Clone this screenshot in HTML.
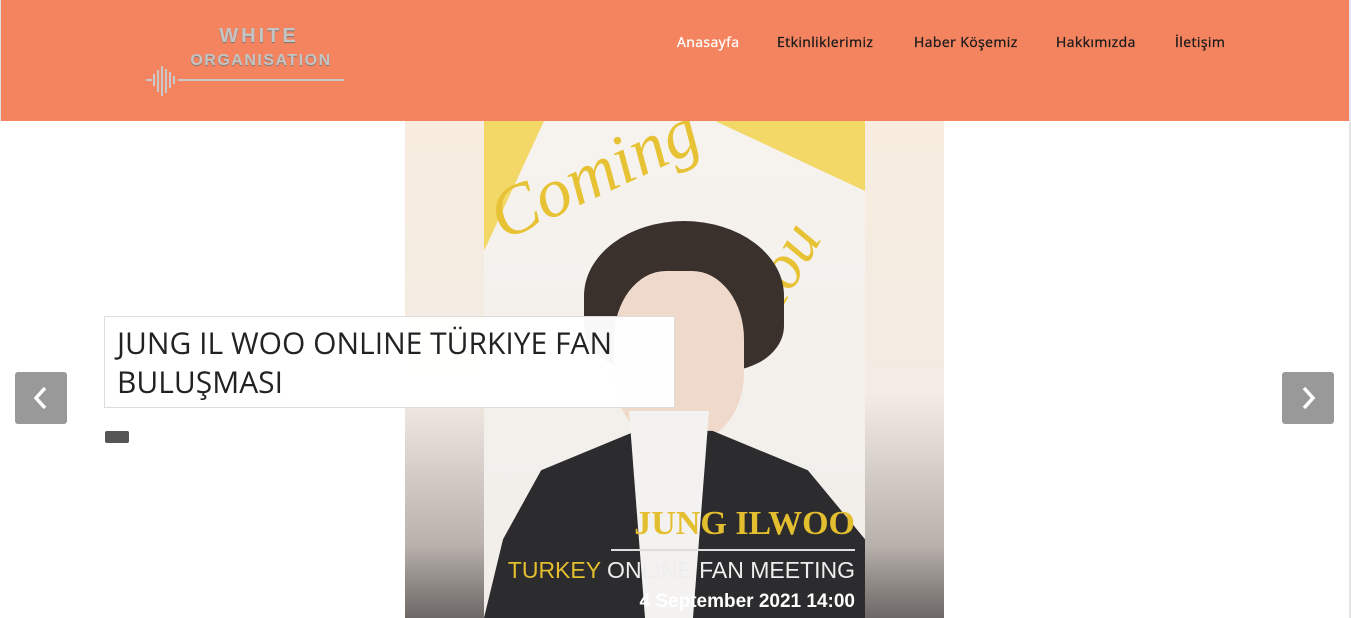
<!DOCTYPE html>
<html><head><meta charset="utf-8"><style>
*{margin:0;padding:0;box-sizing:border-box}
body{width:1351px;height:618px;overflow:hidden;background:#fff;font-family:"Open Sans","Liberation Sans",sans-serif;position:relative}
.hdr{position:absolute;left:0;top:0;width:1349px;height:121px;background:#f4845f;border-left:1px solid #e0e0e0}
.nav{position:absolute;top:33px;font-size:14px;color:#1a1a1a;letter-spacing:.4px;-webkit-text-stroke:.3px #1a1a1a}
.img{position:absolute;left:405px;top:121px;width:539px;height:497px;background:linear-gradient(#f7ecde 0%,#f3ebe4 55%,#b9b2ad 85%,#6d6866 100%)}
.poster{position:absolute;left:79px;top:0;width:381px;height:497px;background:linear-gradient(#f6f3ef,#f1eeea);overflow:hidden}
.cap{position:absolute;left:104px;top:316px;width:571px;height:92px;background:rgba(255,255,255,.97);border:1px solid #ddd;font-size:30px;color:#222;padding:6px 12px;line-height:39px}
.arr{position:absolute;top:372px;width:52px;height:52px;background:#999;border-radius:3px}
</style></head><body>
<div class="hdr">
 <div style="position:absolute;left:178px;top:25px;width:160px;text-align:center;color:#c4c4c4;font:bold 20px 'Liberation Sans',sans-serif;letter-spacing:3px;text-shadow:0 1px 1px #777">WHITE</div>
 <div style="position:absolute;left:176px;top:52px;width:168px;text-align:center;color:#c4c4c4;font:bold 16px 'Liberation Sans',sans-serif;letter-spacing:1.5px;text-shadow:0 1px 1px #777">ORGANISATION</div>
 <svg style="position:absolute;left:143px;top:66px" width="202" height="32"><g stroke="#c9c9c9" stroke-width="2"><line x1="2" y1="14" x2="8" y2="14"/><line x1="10" y1="8" x2="10" y2="20"/><line x1="14" y1="4" x2="14" y2="26"/><line x1="18" y1="0" x2="18" y2="30"/><line x1="22" y1="3" x2="22" y2="27"/><line x1="26" y1="6" x2="26" y2="22"/><line x1="30" y1="10" x2="30" y2="18"/><line x1="34" y1="14" x2="200" y2="14"/></g></svg>
 <div class="nav" style="left:676px;color:#fff;-webkit-text-stroke:.3px #fff">Anasayfa</div>
 <div class="nav" style="left:776px">Etkinliklerimiz</div>
 <div class="nav" style="left:913px">Haber Köşemiz</div>
 <div class="nav" style="left:1055px">Hakkımızda</div>
 <div class="nav" style="left:1174px">İletişim</div>
</div>
<div style="position:absolute;left:1349px;top:0;width:2px;height:618px;background:#e5e5e5"></div>
<div class="img"><div class="poster">
 <div style="position:absolute;left:0;top:0;width:60px;height:130px;background:#f3d868;clip-path:polygon(0 0,100% 0,0 100%)"></div>
 <div style="position:absolute;right:0;top:0;width:150px;height:70px;background:#f3d868;clip-path:polygon(0 0,100% 0,100% 100%)"></div>
 <div style="position:absolute;left:10px;top:60px;font:italic 70px 'Liberation Serif',serif;color:#e6c234;transform:rotate(-25deg);transform-origin:left">Coming</div>
 <div style="position:absolute;left:250px;top:110px;font:italic 64px 'Liberation Serif',serif;color:#e6c234;transform:rotate(-60deg)">You</div>
 <div style="position:absolute;left:100px;top:100px;width:200px;height:150px;background:#3a302c;border-radius:50% 50% 30% 30%"></div>
 <div style="position:absolute;left:130px;top:150px;width:130px;height:170px;background:#efd9cb;border-radius:40%"></div>
 <div style="position:absolute;left:0;top:300px;width:381px;height:197px;background:#2c2b2d;clip-path:polygon(15% 25%,40% 5%,60% 5%,85% 25%,100% 60%,100% 100%,0 100%,5% 60%)"></div>
 <div style="position:absolute;left:145px;top:290px;width:80px;height:207px;background:#f4f2f0;clip-path:polygon(0 0,100% 0,80% 100%,20% 100%)"></div>
 <div style="position:absolute;right:10px;top:384px;font:bold 34px 'Liberation Serif',serif;color:#e3be2f">JUNG ILWOO</div>
 <div style="position:absolute;right:10px;top:428px;width:244px;height:2px;background:#ddd"></div>
 <div style="position:absolute;right:10px;top:436px;font:23px 'Liberation Sans',sans-serif;color:#eee"><span style="color:#e3be2f">TURKEY</span> ONLINE FAN MEETING</div>
 <div style="position:absolute;right:10px;top:470px;font:bold 19px 'Liberation Sans',sans-serif;color:#fff">4 September 2021 14:00</div>
</div></div>
<div class="cap">JUNG IL WOO ONLINE TÜRKIYE FAN BULUŞMASI</div>
<div style="position:absolute;left:105px;top:431px;width:24px;height:12px;background:#555;border-radius:2px"></div>
<div class="arr" style="left:15px"><svg width="52" height="52"><path d="M30 16 L21 26 L30 36" stroke="#fff" stroke-width="3.5" fill="none"/></svg></div>
<div class="arr" style="left:1282px"><svg width="52" height="52"><path d="M22 16 L31 26 L22 36" stroke="#fff" stroke-width="3.5" fill="none"/></svg></div>
</body></html>
